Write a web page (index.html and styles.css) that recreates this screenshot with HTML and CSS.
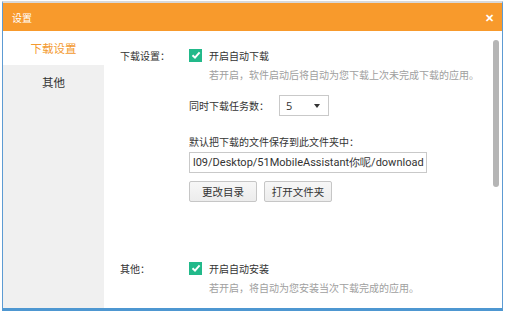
FILE: index.html
```html
<!DOCTYPE html>
<html lang="zh">
<head>
<meta charset="utf-8">
<link rel="stylesheet" href="styles.css">
</head>
<body>
<div class="window">
  <div class="titlebar">
    <span class="title">设置</span>
    <span class="close">✕</span>
  </div>
  <div class="main">
    <div class="sidebar">
      <div class="nav active">下载设置</div>
      <div class="nav">其他</div>
    </div>
    <div class="content">
      <div class="row first">
        <div class="label">下载设置：</div>
        <div class="check"><span class="box"><svg viewBox="0 0 12 12" width="12" height="12"><path d="M2.5 6.2 L5 8.6 L9.6 3.4" fill="none" stroke="#fff" stroke-width="2"/></svg></span>开启自动下载</div>
      </div>
      <div class="desc">若开启，软件启动后将自动为您下载上次未完成下载的应用。</div>
      <div class="indent select-row">同时下载任务数：<div class="select"><span>5</span><span class="arrow"></span></div></div>
      <div class="indent save-label">默认把下载的文件保存到此文件夹中：</div>
      <div class="indent"><div class="path">l09/Desktop/51MobileAssistant你呢/download</div></div>
      <div class="indent buttons"><button class="btn">更改目录</button><button class="btn">打开文件夹</button></div>
      <div class="row other">
        <div class="label">其他：</div>
        <div class="check"><span class="box"><svg viewBox="0 0 12 12" width="12" height="12"><path d="M2.5 6.2 L5 8.6 L9.6 3.4" fill="none" stroke="#fff" stroke-width="2"/></svg></span>开启自动安装</div>
      </div>
      <div class="desc">若开启，将自动为您安装当次下载完成的应用。</div>
      <div class="scrollbar"></div>
    </div>
  </div>
</div>
</body>
</html>
```
FILE: styles.css
```css
html, body { margin: 0; padding: 0; background: #fff; }
body { font-family: "Noto Sans CJK SC", "Noto Sans", sans-serif; font-size: 10px; color: #333; }
.window {
  margin: 1px 3px 0 2px;
  height: 310px;
  box-sizing: border-box;
  border-top: 2px solid #d9d9d9;
  border-left: 1px solid #5d9bd3;
  border-right: 1px solid #5d9bd3;
  border-bottom: 3px solid #4e97d1;
  display: flex;
  flex-direction: column;
}
.titlebar {
  height: 28px;
  background: #f89a2c;
  display: flex;
  align-items: center;
  justify-content: space-between;
  padding: 0 8px 0 9px;
  color: #fff;
  flex: none;
}
.title { font-size: 10px; }
.close { font-size: 11px; font-weight: bold; }
.main { flex: 1; display: flex; min-height: 0; }
.sidebar { width: 101px; background: #f0f0f0; flex: none; }
.nav { height: 34px; line-height: 34px; text-align: center; font-size: 11.5px; color: #333; }
.nav.active { background: #fff; color: #f39a30; }
.content { flex: 1; position: relative; padding: 14px 0 0 16px; }
.row { display: flex; align-items: center; height: 20px; }
.label { width: 69px; flex: none; }
.check { display: flex; align-items: center; }
.box { width: 13px; height: 13px; background: #22b98a; display: inline-flex; align-items: center; justify-content: center; margin-right: 7px; }
.desc { padding-left: 89px; color: #a0a0a0; line-height: 20px; height: 20px; }
.indent { padding-left: 69px; }
.select-row { display: flex; align-items: center; margin-top: 10px; height: 21px; }
.select { margin-left: 10px; display: flex; align-items: center; justify-content: space-between; padding: 0 8px 0 6px; box-sizing: border-box; width: 50px; height: 21px; border: 1px solid #c9c9c9; font-family: "Open Sans", sans-serif; font-size: 11px; }
.arrow { width: 0; height: 0; border-left: 3px solid transparent; border-right: 3px solid transparent; border-top: 4px solid #333; }
.save-label { margin-top: 16px; line-height: 20px; height: 20px; }
.path { width: 238px; height: 21px; box-sizing: border-box; border: 1px solid #c9c9c9; padding: 0 2px 0 3px; font-family: "Roboto", sans-serif; font-size: 11px; line-height: 19px; white-space: nowrap; overflow: hidden; color: #333; }
.buttons { display: flex; gap: 7px; margin-top: 8px; }
.btn { height: 21px; width: 68px; border: 1px solid #c6c6c6; background: linear-gradient(#f7f7f7, #ececec); font-family: "Noto Sans CJK SC", sans-serif; font-size: 10.5px; color: #333; padding: 0; border-radius: 2px; }
.other { margin-top: 56px; }
.scrollbar { position: absolute; right: 3px; top: 9px; width: 6px; height: 147px; background: #b5b5b5; border-radius: 3px; }
```
